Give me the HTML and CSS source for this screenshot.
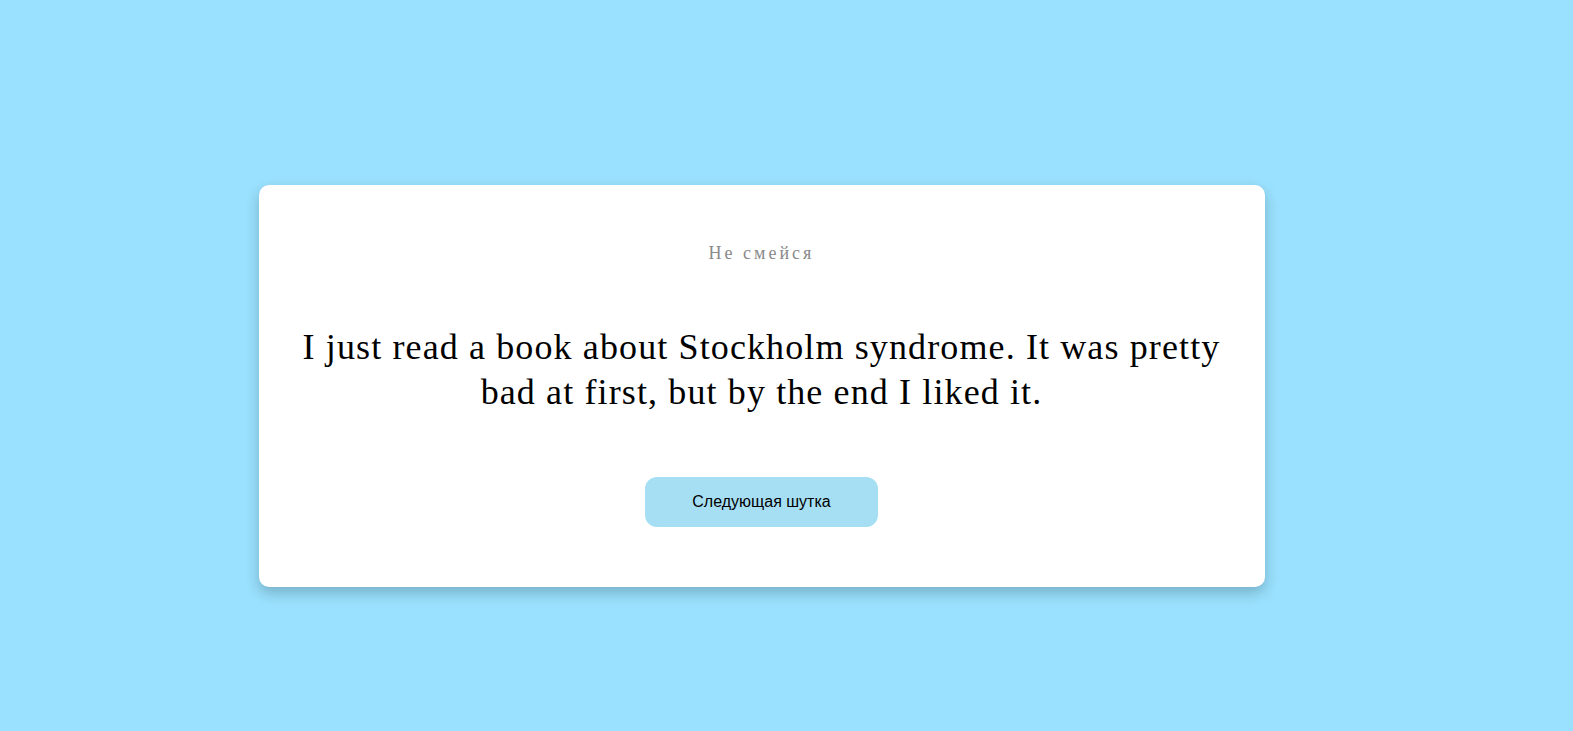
FILE: index.html
```html
<!DOCTYPE html>
<html lang="ru">
<head>
<meta charset="utf-8">
<title>Не смейся</title>
<link rel="stylesheet" href="styles.css">
</head>
<body>
<main class="page">
  <section class="card">
    <h1 class="title">Не смейся</h1>
    <p class="joke">I just read a book about Stockholm syndrome. It was pretty bad at first, but by the end I liked it.</p>
    <button class="next" type="button">Следующая шутка</button>
  </section>
</main>
</body>
</html>
```

FILE: styles.css
```css
html, body {
  margin: 0;
  padding: 0;
  height: 100%;
}
body {
  background: #99e1fe;
  font-family: "Liberation Serif", "Times New Roman", serif;
}
.page {
  box-sizing: border-box;
  height: 100%;
  display: flex;
  align-items: center;
  justify-content: center;
  padding: 40px 50px 0 0;
}
.card {
  box-sizing: border-box;
  width: 1006px;
  height: 402px;
  background: #fff;
  border-radius: 10px;
  box-shadow: 0 6px 14px rgba(0, 0, 0, 0.22);
  display: flex;
  flex-direction: column;
  align-items: center;
  padding: 58px 40px 0;
}
.title {
  margin: 0;
  font-size: 18px;
  font-weight: normal;
  letter-spacing: 3px;
  color: #8a8a8a;
  line-height: 20px;
}
.joke {
  margin: 62px 0 0;
  font-size: 36px;
  line-height: 45px;
  letter-spacing: 1.12px;
  text-align: center;
  color: #000;
}
.next {
  margin-top: 62px;
  width: 233px;
  height: 50px;
  border: none;
  border-radius: 12px;
  background: #a6dff3;
  font-family: "Liberation Sans", Arial, sans-serif;
  font-size: 16px;
  color: #000;
}
```
